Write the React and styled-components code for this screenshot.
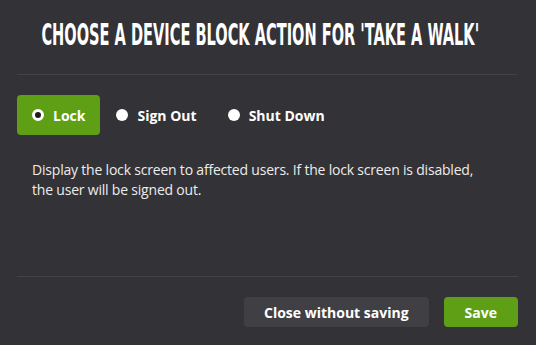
import React, { useState } from "react";
import styled, { createGlobalStyle } from "styled-components";

const GlobalStyle = createGlobalStyle`
  html, body {
    margin: 0;
    padding: 0;
    background: #333236;
  }
  body {
    font-family: "Open Sans", "Liberation Sans", sans-serif;
    color: #f2f2f2;
  }
`;

const actions = [
  { label: "Lock", value: "lock", text: "Display the lock screen to affected users. If the lock screen is disabled, the user will be signed out." },
  { label: "Sign Out", value: "signout", text: "Sign the affected users out of their session." },
  { label: "Shut Down", value: "shutdown", text: "Shut down the device for affected users." }
];

const Modal = styled.div`
  width: 536px;
  height: 345px;
  box-sizing: border-box;
  padding: 0 19px 0 17px;
  display: flex;
  flex-direction: column;
  background: #333236;
`;

const Header = styled.div`
  height: 75px;
  box-sizing: border-box;
  padding: 0 14px 4px 0;
  display: flex;
  align-items: center;
  justify-content: center;
  border-bottom: 1px solid #434247;
`;

const Title = styled.h1`
  margin: 0;
  font-family: "DejaVu Sans Condensed", "Liberation Sans Narrow", sans-serif;
  font-weight: bold;
  font-size: 30px;
  line-height: 1;
  color: #fff;
  white-space: nowrap;
  transform: scaleX(0.54);
`;

const Body = styled.div`
  flex: 1;
  padding-top: 20px;
`;

const OptionRow = styled.div`
  display: flex;
  gap: 1px;
`;

const Option = styled.button`
  display: flex;
  align-items: center;
  gap: 9px;
  height: 40px;
  padding: 0 15px;
  border: none;
  border-radius: 4px;
  background: ${(p) => (p.selected ? "#5f9f16" : "transparent")};
  color: #fff;
  font-family: "Open Sans", sans-serif;
  font-weight: bold;
  font-size: 14px;
  cursor: pointer;
`;

const Dot = styled.span`
  width: 12px;
  height: 12px;
  box-sizing: border-box;
  border-radius: 50%;
  background: ${(p) => (p.selected ? "#1d1d20" : "#fff")};
  border: ${(p) => (p.selected ? "3px solid #fff" : "none")};
`;

const Description = styled.p`
  margin: 25px 0 0 15px;
  font-size: 14px;
  line-height: 20px;
  letter-spacing: -0.2px;
  color: #ececec;
  max-width: 460px;
`;

const Footer = styled.div`
  height: 69px;
  box-sizing: border-box;
  display: flex;
  justify-content: flex-end;
  align-items: center;
  gap: 15px;
  border-top: 1px solid #434247;
  padding-top: 2px;
  margin-right: -1px;
`;

const Button = styled.button`
  height: 30px;
  padding: 0 ${(p) => (p.primary ? "21px" : "20px")};
  border: none;
  border-radius: 4px;
  background: ${(p) => (p.primary ? "#5f9f16" : "#403f44")};
  color: #fff;
  font-family: "Open Sans", sans-serif;
  font-weight: bold;
  font-size: 14px;
  cursor: pointer;
`;

export default function App() {
  const [action, setAction] = useState("lock");
  const current = actions.find((a) => a.value === action);

  return (
    <>
      <GlobalStyle />
      <Modal>
        <Header>
          <Title>CHOOSE A DEVICE BLOCK ACTION FOR 'TAKE A WALK'</Title>
        </Header>
        <Body>
          <OptionRow>
            {actions.map((a) => (
              <Option key={a.value} selected={a.value === action} onClick={() => setAction(a.value)}>
                <Dot selected={a.value === action} />
                {a.label}
              </Option>
            ))}
          </OptionRow>
          <Description>{current.text}</Description>
        </Body>
        <Footer>
          <Button>Close without saving</Button>
          <Button primary>Save</Button>
        </Footer>
      </Modal>
    </>
  );
}
